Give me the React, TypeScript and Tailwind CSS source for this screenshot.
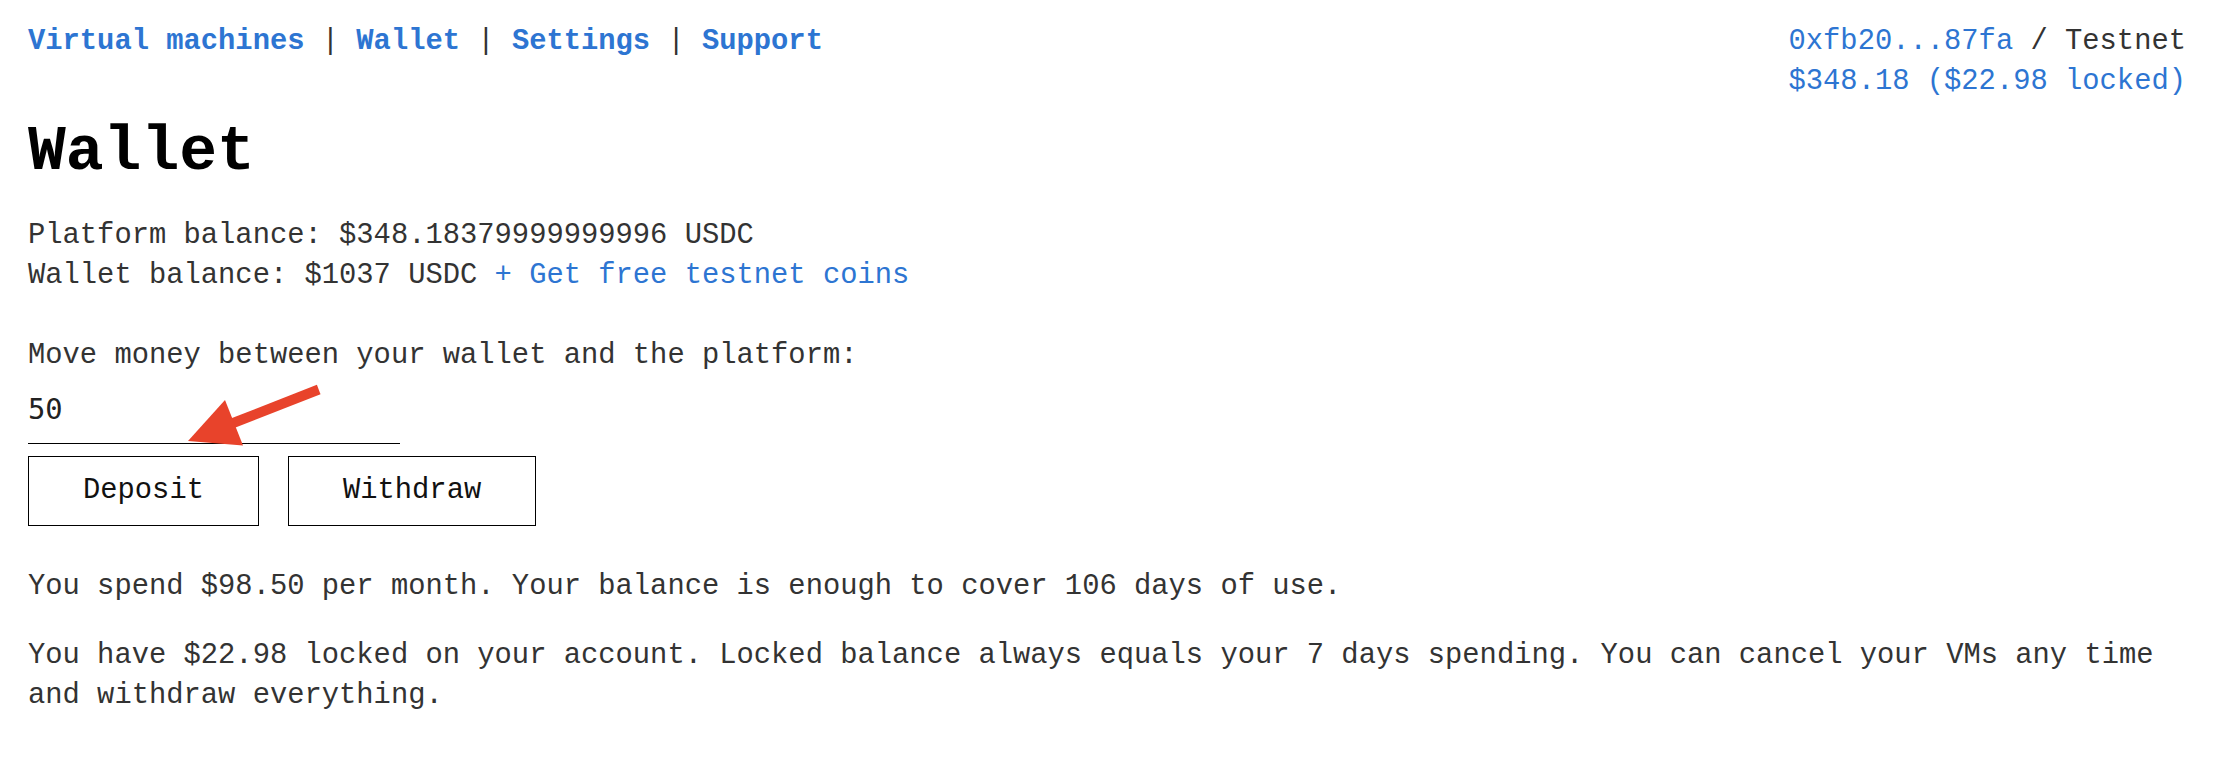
import React from "react";

function Arrow() {
  return (
    <svg
      className="absolute left-[180px] top-[380px] w-[150px] h-[70px] pointer-events-none"
      viewBox="180 380 150 70"
    >
      <line x1="228" y1="425" x2="318.7" y2="389.5" stroke="#e8432b" strokeWidth="10" />
      <polygon points="188,441 225,400 243,445.5" fill="#e8432b" />
    </svg>
  );
}

export default function App() {
  const nav = ["Virtual machines", "Wallet", "Settings", "Support"];

  return (
    <div className="relative min-h-screen bg-white pl-[28px] pr-[41px] pt-[22px] text-[28.8px] leading-[39.6px] text-[#333] font-['Liberation_Mono','Courier_New',monospace]">
      <div className="flex justify-between">
        <div>
          {nav.map((item, i) => (
            <span key={item}>
              {i > 0 && <span className="text-[#333]"> | </span>}
              <a className="font-bold text-[#2d75d2] cursor-pointer">{item}</a>
            </span>
          ))}
        </div>
        <div className="text-right">
          <div>
            <a className="text-[#2d75d2] cursor-pointer">0xfb20...87fa</a> / Testnet
          </div>
          <div className="text-[#2d75d2]">$348.18 ($22.98 locked)</div>
        </div>
      </div>

      <h1 className="mt-[16px] text-[63px] leading-[72px] font-bold text-black">Wallet</h1>

      <div className="mt-[27px]">
        <div>Platform balance: $348.18379999999996 USDC</div>
        <div>
          Wallet balance: $1037 USDC{" "}
          <a className="text-[#2d75d2] cursor-pointer">+ Get free testnet coins</a>
        </div>
      </div>

      <p className="mt-[41px]">Move money between your wallet and the platform:</p>

      <input
        type="text"
        defaultValue="50"
        className="block w-[372px] h-[68px] border-0 border-b border-black bg-transparent p-0 text-[28.8px] text-[#222] outline-none font-['DejaVu_Sans_Mono',monospace]"
      />

      <div className="mt-[12px] flex gap-[29px]">
        <button className="border border-black px-[54px] py-[14px] text-[#111] bg-white">Deposit</button>
        <button className="border border-black px-[54px] py-[14px] text-[#111] bg-white">Withdraw</button>
      </div>

      <p className="mt-[41px]">
        You spend $98.50 per month. Your balance is enough to cover 106 days of use.
      </p>

      <p className="mt-[30px]">
        You have $22.98 locked on your account. Locked balance always equals your 7 days spending. You can
        cancel your VMs any time and withdraw everything.
      </p>

      <Arrow />
    </div>
  );
}
